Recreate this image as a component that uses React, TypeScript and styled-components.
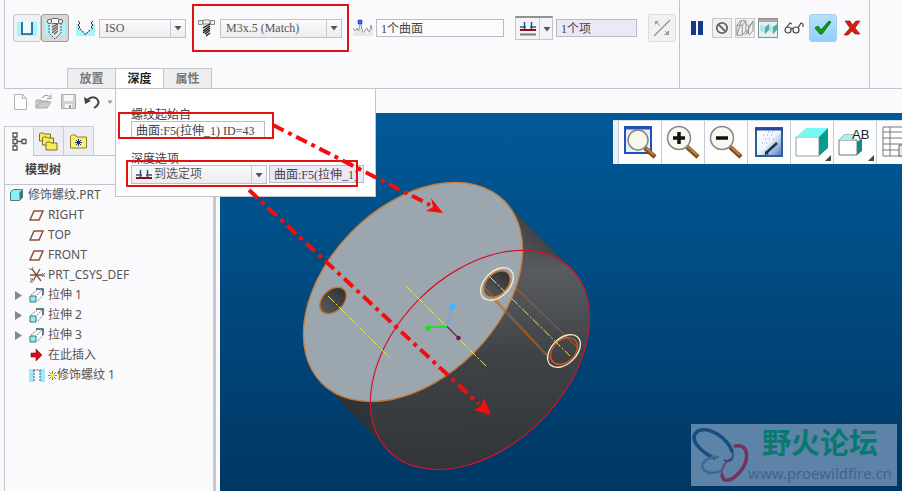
import React from "react";
import styled, { createGlobalStyle } from "styled-components";

const uiFont = `"Liberation Serif", "Noto Sans CJK SC", serif`;
const treeFont = `"Noto Sans", "Noto Sans CJK SC", sans-serif`;

const GlobalStyle = createGlobalStyle`
  * { box-sizing: border-box; }
  body { margin: 0; background: #fafafd; font-family: ${treeFont}; font-size: 12px; color: #555; }
  button, input, select { font: inherit; color: inherit; margin: 0; border-radius: 0; }
  svg { display: block; flex: none; }
`;

const Page = styled.div`
  position: relative;
  display: flex;
  flex-direction: column;
  min-height: 100vh;
  overflow: hidden;
`;

/* ---------- ribbon ---------- */
const Ribbon = styled.header`
  display: flex;
  height: 89px;
  margin-left: 4px;
  border-left: 1px solid #c3c5cb;
  border-bottom: 1px solid #c3c5cb;
`;
const Dashboard = styled.div`
  display: flex;
  flex-direction: column;
  justify-content: space-between;
  width: 675px;
  flex: none;
  border-right: 1px solid #c3c5cb;
`;
const ToolRow = styled.div`
  display: flex;
  align-items: center;
  height: 28px;
  margin-top: 14px;
  padding-left: 8px;
`;
const Confirm = styled(ToolRow)`
  height: 88px;
  margin: 0;
  padding: 0 7px 32px 7px;
  gap: 3px;
  border-right: 1px solid #c3c5cb;
`;
const SquareButton = styled.button<{ $tone?: "plain" | "pressed" | "go" | "off" }>`
  display: flex;
  align-items: center;
  justify-content: center;
  width: 28px;
  height: 28px;
  flex: none;
  padding: 0;
  border-radius: 3px;
  border: 1px solid ${(p) => (p.$tone === "pressed" ? "#9b9b9b" : p.$tone === "go" ? "#9fd0ef" : p.$tone === "off" ? "#dcdcdf" : "#c6c6c8")};
  background: ${(p) => (p.$tone === "pressed" ? "#d8d8da" : p.$tone === "go" ? "linear-gradient(#b9e0fb, #8fd0fb)" : "#f1f1f3")};
`;
const SmallButton = styled.button<{ $frame?: "light" | "dark" | "none" }>`
  display: flex;
  align-items: center;
  justify-content: center;
  width: 20px;
  height: 20px;
  flex: none;
  padding: 0;
  border: ${(p) => (p.$frame === "dark" ? "1px solid #8d8d90" : p.$frame === "light" ? "1px solid #c9c9cc" : "0")};
  background: ${(p) => (p.$frame === "dark" ? "#c9cbce" : p.$frame === "light" ? "#f1f1f3" : "transparent")};
`;
const Slot = styled.span<{ $before: number; $after: number }>`
  display: block;
  flex: none;
  margin: 0 ${(p) => p.$after}px 0 ${(p) => p.$before}px;
`;
const SelectFrame = styled.label<{ $width: number }>`
  display: grid;
  grid-template-columns: 1fr 15px;
  align-items: center;
  width: ${(p) => p.$width}px;
  height: 19px;
  flex: none;
  border: 1px solid #bfc1c6;
  background: linear-gradient(#fafafc, #ededf0);
  font-family: ${uiFont};
`;
const Select = styled.select<{ $indent: number }>`
  grid-area: 1 / 1 / 2 / 3;
  appearance: none;
  width: 100%;
  height: 17px;
  padding: 0 16px 0 ${(p) => p.$indent}px;
  border: 0;
  background: transparent;
  line-height: 17px;
`;
const SelectArrow = styled.span`
  grid-area: 1 / 2;
  display: flex;
  align-items: center;
  justify-content: center;
  height: 17px;
  border-left: 1px solid #c9cbd0;
  pointer-events: none;
`;
const SelectIcon = styled.span`
  grid-area: 1 / 1;
  padding-left: 4px;
  pointer-events: none;
`;
const Collector = styled.input<{ $width: number; $active?: boolean }>`
  width: ${(p) => p.$width}px;
  height: 18px;
  flex: none;
  padding: 0 4px;
  border: 1px solid #b9bbc1;
  background: ${(p) => (p.$active ? "#ece8f7" : "#fbfafd")};
  color: #444;
  font-family: ${uiFont};
  line-height: 16px;
`;
const SplitButton = styled.button`
  display: grid;
  grid-template-columns: 23px 14px;
  align-items: center;
  width: 38px;
  height: 24px;
  flex: none;
  padding: 0;
  border: 1px solid #c3c5c9;
  border-top: 2px solid #8f9195;
  background: #f4f4f6;
`;
const SplitPart = styled.span<{ $divided?: boolean }>`
  display: flex;
  align-items: center;
  justify-content: center;
  height: 21px;
  border-left: ${(p) => (p.$divided ? "1px solid #c9cbd0" : "0")};
`;
const TabRow = styled.div`
  display: flex;
  margin-left: 62px;
`;
const Tab = styled.button<{ $active?: boolean }>`
  width: 48px;
  height: 20px;
  padding: 0;
  border: 1px solid #c3c5cb;
  border-width: 1px 1px 0 0;
  background: ${(p) => (p.$active ? "#fff" : "#eceef0")};
  color: ${(p) => (p.$active ? "#222" : "#777")};
  font-weight: 700;
  line-height: 18px;
  &:first-child { border-left-width: 1px; width: 49px; }
`;

/* ---------- depth panel ---------- */
const DepthPanel = styled.section`
  position: absolute;
  left: 115px;
  top: 88px;
  width: 261px;
  height: 109px;
  padding: 17px 11px 0 15px;
  border: 1px solid #c3c5cb;
  background: #fff;
`;
const FieldLabel = styled.label`
  display: block;
  height: 15px;
  line-height: 18px;
  color: #444;
`;
const FieldRow = styled.div`
  display: flex;
  gap: 2px;
  height: 29px;
`;

/* ---------- body ---------- */
const Body = styled.div`
  display: flex;
  flex: 1;
`;
const Side = styled.aside`
  display: flex;
  flex-direction: column;
  width: 220px;
  flex: none;
`;
const QuickBar = styled.div`
  display: flex;
  align-items: center;
  gap: 4px;
  height: 37px;
  padding: 0 0 12px 11px;
`;
const QuickButton = styled.button<{ $width: number }>`
  display: flex;
  justify-content: center;
  width: ${(p) => p.$width}px;
  padding: 0;
  border: 0;
  background: transparent;
`;
const Navigator = styled.nav`
  flex: 1;
  width: 212px;
  margin-left: 4px;
  border-left: 1px solid #c3c5cb;
  border-right: 3px solid #c6c9d0;
`;
const NavTabs = styled.div`
  display: flex;
  height: 30px;
  border-bottom: 1px solid #c3c5cb;
`;
const NavTab = styled.button<{ $active?: boolean }>`
  display: flex;
  align-items: center;
  justify-content: center;
  width: ${(p) => (p.$active ? 29 : 30)}px;
  height: ${(p) => (p.$active ? 30 : 29)}px;
  padding: 0;
  border: 1px solid #c9cbd0;
  border-width: 1px 1px 0 0;
  background: ${(p) => (p.$active ? "#fafafd" : "#eceef1")};
`;
const NavTitle = styled.h2`
  height: 29px;
  margin: 0;
  padding-left: 20px;
  border-bottom: 1px solid #c3c5cb;
  font-size: 12px;
  line-height: 28px;
  color: #444;
`;
const TreeList = styled.ul`
  margin: 0;
  padding: 0;
  list-style: none;
`;
const TreeRow = styled.li<{ $root?: boolean }>`
  display: grid;
  grid-template-columns: ${(p) => (p.$root ? "18px 1fr" : "14px 19px 1fr")};
  align-items: center;
  height: 20px;
  padding-left: ${(p) => (p.$root ? 5 : 10)}px;
  line-height: 20px;
`;
const TreeText = styled.span`
  display: flex;
  align-items: center;
  white-space: nowrap;
`;

/* ---------- viewport ---------- */
const Main = styled.main`
  display: flex;
  flex: 1;
  flex-direction: column;
  padding-top: 24px;
`;
const Viewport = styled.div`
  position: relative;
  flex: 1;
  overflow: hidden;
  background: linear-gradient(#005a98, #003764);
`;
const Scene = styled.svg`
  position: absolute;
  inset: 0;
  width: 100%;
  height: 100%;
`;
const ViewTools = styled.div`
  position: absolute;
  top: 7px;
  right: 0;
  display: flex;
  width: 289px;
  height: 44px;
  padding-left: 5px;
  overflow: hidden;
  border-top: 1px solid #d5dbe0;
  background: #eef1f3;
`;
const ViewTool = styled.button`
  width: 43px;
  height: 43px;
  flex: none;
  padding: 0;
  border: 0;
  border-left: 1px solid #c5cbd2;
  background: #fdfdfe;
`;
const Watermark = styled.div`
  position: absolute;
  right: 5px;
  bottom: 5px;
  display: flex;
  width: 206px;
  height: 62px;
  background: #5d84a8;
`;
const WatermarkText = styled.div`
  display: flex;
  flex-direction: column;
  align-items: center;
  width: 148px;
  flex: none;
`;
const Brand = styled.strong`
  height: 37px;
  font-size: 29px;
  line-height: 38px;
  color: #08796f;
  white-space: nowrap;
`;
const Site = styled.a`
  font-size: 15px;
  line-height: 24px;
  color: #3d658f;
  text-decoration: none;
  font-family: "Noto Sans", sans-serif;
`;
const Callouts = styled.svg`
  position: absolute;
  inset: 0;
  width: 100%;
  height: 100%;
  pointer-events: none;
`;

/* ---------- icons ---------- */
const Caret = ({ size = 8, color = "#555" }: { size?: number; color?: string }) => (
  <svg width={size} height={size} viewBox="0 0 8 8"><path d="M0.5 2h7L4 6.5z" fill={color} /></svg>
);
const PlainHole = () => (
  <svg width="22" height="22" viewBox="0 0 22 22">
    <path d="M1 5h20v14H1z" fill="#9ffafa" />
    <path d="M6 5h10v12H6z" fill="#eefcff" />
    <path d="M6 5v12h10V5" fill="none" stroke="#234b8c" strokeWidth="1.6" />
  </svg>
);
const ThreadHole = () => (
  <svg width="24" height="24" viewBox="0 0 24 24">
    <path d="M2 6h20v13H2z" fill="#9ffafa" />
    <path d="M6 7h12v10l-6 6-6-6z" fill="#e4e6e6" stroke="#44577a" strokeDasharray="2 1" />
    <path d="M9 8h6v8l-3 4-3-4z" fill="#c9c9c9" />
    <rect x="4.500" y="3.500" width="4" height="4" rx="1.500" fill="#f5f5f5" stroke="#666" />
    <rect x="8.500" y="2.500" width="7" height="5" rx="1" fill="#f5f5f5" stroke="#666" />
    <rect x="15.500" y="3.500" width="4" height="4" rx="1.500" fill="#f5f5f5" stroke="#666" />
    <path d="M9 11l6-3M9 14l6-4M9 17l6-5M11 18l4-3" stroke="#444" />
  </svg>
);
const TaperHole = () => (
  <svg width="19" height="15" viewBox="0 0 19 15">
    <path d="M0 3h19v12H0z" fill="#a4f8fa" />
    <path d="M4 0h11v9l-5.500 5L4 9z" fill="#fafafd" />
    <path d="M2 0l2 2-2 2 2 2-2 2M17 0l-2 2 2 2-2 2 2 2" fill="none" stroke="#333" />
    <path d="M4 8l5.500 5.500L15 8" fill="none" stroke="#315a9b" strokeWidth="1.300" strokeDasharray="2 1" />
  </svg>
);
const Screw = () => (
  <svg width="17" height="18" viewBox="0 0 17 18">
    <path d="M.5 1.500h4v4h-4zM5 1h7v4H5zM12.500 1.500h4v4h-4z" fill="#eee" stroke="#888" />
    <path d="M5 6h7v8l-3 3-4-4z" fill="#d0d0d0" />
    <path d="M5 9l7-4M5 12l7-5M5 14l7-5M7 15l5-4M8 17l4-3" stroke="#222" strokeWidth="1.2" />
  </svg>
);
const CurvePoint = () => (
  <svg width="20" height="18" viewBox="0 0 20 18">
    <path d="M0 14l4-1 3-5 4 5 3 1 6-5v8H0z" fill="#e6e8ea" />
    <path d="M0 9q2 6 4 0 2 8 3-5M8 5q1 11 4 7 2-6 3 0 2 3 3-6l1 4" fill="none" stroke="#909398" />
    <path d="M5.500 1.500h3v3h-3z" fill="#7ea0f5" stroke="#2148dc" strokeWidth="1.500" />
  </svg>
);
const DepthTo = ({ under = false }: { under?: boolean }) => (
  <svg width="16" height={under ? 16 : 12} viewBox={under ? "0 0 16 16" : "0 0 16 12"}>
    <path d="M0 6h4M12 6h4" stroke="#5e8292" strokeWidth="2" />
    <path d="M4.500 1v8M11.500 1v8M4 6h2M10 6h2" stroke="#25508c" strokeWidth="1.500" fill="none" />
    <path d="M0 9h16" stroke="#8c0b1b" strokeWidth="2" />
    {under && <path d="M0 13.500h16" stroke="#777" strokeWidth="2" />}
  </svg>
);
const Flip = () => (
  <svg width="18" height="18" viewBox="0 0 18 18" stroke="#999" fill="#999">
    <path d="M1 17L17 1" strokeWidth="1.500" />
    <path d="M4 4l3 3M12 12l2 2" /><path d="M2 2h4L2 6zM16 16h-5l5-5z" stroke="none" />
  </svg>
);
const Pause = () => (
  <svg width="14" height="16" viewBox="0 0 14 16"><path d="M1 1h5v14H1zM8 1h5v14H8z" fill="#123a8c" /></svg>
);
const Forbidden = () => (
  <svg width="14" height="14" viewBox="0 0 14 14" fill="none" stroke="#666" strokeWidth="1.800">
    <circle cx="7" cy="7" r="5.200" /><path d="M3.500 3.500l7 7" />
  </svg>
);
const WireBoxes = () => (
  <svg width="18" height="18" viewBox="0 0 20 20" fill="none" stroke="#888">
    <path d="M1 7l4-5h6v11l-4 5H1zM1 7h6v11M7 7l4-5M11 5l3 3v9l-3-4M14 8l5-5v10l-5 5M1 18L6 2M10 18l9-16" />
  </svg>
);
const SolidBoxes = () => (
  <svg width="18" height="18" viewBox="0 0 18 18">
    <path d="M0 0h18v18H0z" fill="#e9eeef" /><path d="M0 0h18v3H0z" fill="#a7aaad" />
    <path d="M1 5l5 3v7l-5-4zM10 5l4 3v7l-4-4z" fill="#a8e9e3" /><path d="M6 8l4-3v6l-4 4zM14 8l4-3v6l-4 4z" fill="#56a9a5" />
  </svg>
);
const Glasses = () => (
  <svg width="20" height="14" viewBox="0 0 20 14" fill="none" stroke="#4b463a" strokeWidth="1.200">
    <circle cx="4" cy="9" r="3" /><circle cx="12" cy="9" r="3" />
    <path d="M7 8q1-2 2 0M2 7l4-5 2 1M14 7l3-5 2 1v3" />
  </svg>
);
const Check = () => (
  <svg width="18" height="16" viewBox="0 0 18 16"><path d="M1 8l3-2 3 4 8-9 2 1L8 14H6z" fill="#109817" stroke="#087d10" /></svg>
);
const Cross = () => (
  <svg width="18" height="18" viewBox="0 0 18 18"><path d="M2 2h5l2.500 4L13 2h4l-5 7 5 6h-5l-3-3-4 4H1l6-7z" fill="#d51d15" stroke="#a51412" strokeWidth=".7" /></svg>
);
const NewDoc = () => (
  <svg width="13" height="16" viewBox="0 0 13 16"><path d="M.5.5h8l4 4v11H.5zM8.500.5v4h4" fill="#fdfdfd" stroke="#b4b4b7" /></svg>
);
const OpenDoc = () => (
  <svg width="18" height="16" viewBox="0 0 18 16">
    <path d="M1 14V6h5l1 1h6v2M1 14l4-6h11l-4 6z" fill="#ccccce" stroke="#aaa" /><path d="M7 4q4-5 8-1M16 .5v4h-4" fill="none" stroke="#999" />
  </svg>
);
const SaveDoc = () => (
  <svg width="15" height="15" viewBox="0 0 15 15"><path d="M.5.5h14v14H.5z" fill="#d2d2d4" stroke="#aaa" /><path d="M3 1h9v6H3zM4 10h7v4H4z" fill="#f7f7f8" /><path d="M8 11h2v3H8z" fill="#999" /></svg>
);
const Undo = () => (
  <svg width="17" height="14" viewBox="0 0 17 14"><path d="M3 5q6-5 10-1 4 5-3 9" fill="none" stroke="#444" strokeWidth="2" /><path d="M0 2l1 7 6-3z" fill="#444" /></svg>
);
const TreeTab = () => (
  <svg width="15" height="19" viewBox="0 0 15 19" fill="#fff" stroke="#555" strokeWidth="1.300"><path d="M3 4v11M3 9.500h7" /><path d="M1 1h4v4H1zM1 7.500h4v4H1zM1 14h4v4H1zM10 7.500h4v4h-4z" /></svg>
);
const Folders = () => (
  <svg width="19" height="19" viewBox="0 0 19 19" fill="#f7ec5b" stroke="#77702b">
    <path d="M.5 9V2l1-1h3l1 1h6v7z" /><path d="M3.500 13V6l1-1h3l1 1h6v7z" /><path d="M7 18v-7l1-1h3l1 1h6v7z" />
  </svg>
);
const Favorite = () => (
  <svg width="17" height="15" viewBox="0 0 17 15"><path d="M.5 14V3l1-2h4l1 2h10v11z" fill="#fbf36b" stroke="#8a8232" /><path d="M8.500 5v7M5 8.500h7M6 6l5 5M11 6l-5 5" stroke="#172d80" /></svg>
);
const Part = () => (
  <svg width="13" height="12" viewBox="0 0 13 12"><path d="M.5 3l3-2.500h9v8l-3 3h-9z" fill="#8deff2" stroke="#50777b" /><path d="M9.500 3v8l3-2.500V1z" fill="#32777c" /></svg>
);
const Plane = () => (
  <svg width="15" height="11" viewBox="0 0 15 11"><path d="M1 10L5 1h9l-4 9z" fill="none" stroke="#925036" strokeWidth="1.500" /></svg>
);
const Csys = () => (
  <svg width="17" height="16" viewBox="0 0 17 16" fill="none" stroke="#805039" strokeWidth="1.300">
    <path d="M1 8h13M3 2l9 12M11 2L4 14" /><path d="M0 1l2 2 2-3M1 12h3l-3 3h3M13 6l3 4M16 6l-3 4" stroke="#777" strokeWidth="1" />
  </svg>
);
const Extrude = () => (
  <svg width="15" height="15" viewBox="0 0 15 15" fill="none"><path d="M1 8h6v6H1z" fill="#92eef0" stroke="#34777e" /><path d="M7 1h7v6" stroke="#315960" strokeWidth="1.500" /><path d="M2 7l6-5M9 13l5-6M8 7l5-5" stroke="#888" strokeDasharray="2 1" /></svg>
);
const InsertArrow = () => (
  <svg width="15" height="12" viewBox="0 0 15 12"><path d="M2 4h5V0l6 6-6 6V8H2z" fill="#d40b16" stroke="#8c0810" strokeWidth=".6" /></svg>
);
const ThreadFeature = () => (
  <svg width="16" height="13" viewBox="0 0 16 13"><path d="M0 0h5v13H0zM11 0h5v13h-5z" fill="#9eeaf0" /><path d="M4.500 1h7M5 1v12M11 1v12" stroke="#34598c" strokeDasharray="2 1" /></svg>
);
const NewStar = () => (
  <svg width="9" height="9" viewBox="0 0 9 9"><path d="M4.500 0v9M0 4.500h9M1 1l7 7M8 1L1 8" stroke="#8b8610" /><circle cx="4.500" cy="4.500" r="2" fill="#f3ec24" /></svg>
);
const Lens = ({ sign, x = 0 }: { sign?: "+" | "-"; x?: number }) => (
  <g transform={`translate(${x} 0)`}>
    <path d="M25 26l11 10" stroke="#80511c" strokeWidth="4.500" /><path d="M26 26l9 8" stroke="#c8924a" strokeWidth="1.500" />
    <circle cx="17" cy="17" r="11.500" fill="#f6f7ed" stroke="#858585" strokeWidth="1.500" />
    {sign && <path d="M11 17h12" stroke="#111" strokeWidth="3.500" />}
    {sign === "+" && <path d="M17 11v12" stroke="#111" strokeWidth="3.500" />}
  </g>
);
const Corner = () => <path d="M40 34v6h-6z" fill="#444" />;
const ToolSvg = ({ children }: { children: React.ReactNode }) => <svg width="42" height="43" viewBox="0 0 42 43">{children}</svg>;

const viewTools: { name: string; art: React.ReactNode }[] = [
  { name: "Refit", art: <><path d="M6 6h26v26H6z" fill="#e8f0fc" stroke="#2550b5" strokeWidth="2" /><path d="M5 7h28" stroke="#2550b5" strokeWidth="3" /><g transform="translate(2 2)"><circle cx="17" cy="17" r="10" fill="#f6f7ed" stroke="#858585" strokeWidth="1.500" /><path d="M24 25l10 9" stroke="#80511c" strokeWidth="4.500" /><path d="M25 25l8 7" stroke="#c8924a" strokeWidth="1.500" /></g></> },
  { name: "Zoom in", art: <Lens sign="+" /> },
  { name: "Zoom out", art: <Lens sign="-" /> },
  { name: "Repaint", art: <><path d="M8 7h26v28H8z" fill="url(#paint)" stroke="#315c9b" strokeWidth="2" /><path d="M7 8h28" stroke="#224b9b" strokeWidth="3" /><path d="M15 14h10M17 18h12M14 22h8M20 11h8" stroke="#7b9bc5" strokeDasharray="1 3" /><path d="M18 32l11-10" stroke="#15345f" strokeWidth="2.500" /><path d="M17 30l4 3-4 1z" fill="#15345f" /></> },
  { name: "Display style", art: <><path d="M5 16h23v19H5z" fill="#fff" stroke="#8aa5a5" /><path d="M5 16l10-9h22l-9 9z" fill="#79f7f2" /><path d="M28 16l9-9v20l-9 8z" fill="#0c9990" /><Corner /></> },
  { name: "Annotations", art: <><path d="M5 19l5-5h10M5 19h18v15H5z" fill="#fff" stroke="#777" /><path d="M5 19l5-5h12l-3 5z" fill="#a2f4f2" /><path d="M23 21l5-4v13l-5 4z" fill="#148a83" /><text x="18" y="18" fontFamily="Liberation Sans, sans-serif" fontSize="13" fill="#222">AB</text><Corner /></> },
  { name: "View manager", art: <><path d="M6 6h30v29H6zM6 11h30M6 17h30M6 23h30M6 29h30M13 6v29" fill="#fff" stroke="#777" /><path d="M22 24h9v11h-9z" fill="#eee6ce" stroke="#666" /></> },
];

const Disc = ({ x, y, a, b, ...rest }: { x: number; y: number; a: number; b: number } & React.SVGProps<SVGEllipseElement>) => (
  <ellipse cx={x} cy={y} rx={a} ry={b} transform={`rotate(-45 ${x} ${y})`} {...rest} />
);

const Model = () => (
  <Scene aria-label="3D model">
    <defs>
      <linearGradient id="side" gradientUnits="userSpaceOnUse" x1="380" y1="440" x2="560" y2="250">
        <stop offset="0" stopColor="#303335" /><stop offset=".5" stopColor="#404346" /><stop offset=".82" stopColor="#585b60" /><stop offset="1" stopColor="#3f4246" />
      </linearGradient>
      <linearGradient id="bore"><stop offset="0" stopColor="#555a5c" /><stop offset="1" stopColor="#303334" /></linearGradient>
      <linearGradient id="paint" x2="1" y2="1"><stop offset="0" stopColor="#fff" /><stop offset=".5" stopColor="#edf5ff" /><stop offset="1" stopColor="#4777b9" /></linearGradient>
    </defs>
    <g transform="translate(-220 -113)" fill="none">
      <path d="M504 201l67 68-182 182-67-68z" fill="url(#side)" />
      <Disc x={480} y={360} a={129} b={86} fill="url(#side)" />
      <Disc x={413} y={292} a={129} b={86} fill="#9ca6af" stroke="#c77a35" strokeWidth="1.300" />
      <Disc x={480} y={360} a={129} b={86} stroke="#d0142b" strokeWidth="1.200" />
      <Disc x={333} y={300.5} a={15.5} b={10.5} fill="url(#bore)" stroke="#c9772e" strokeWidth="1.300" />
      <Disc x={497} y={284} a={15.5} b={10.5} fill="url(#bore)" stroke="#c9772e" strokeWidth="1.500" />
      <path d="M516 288l62 60M493 299l55 58M484 287l69 74" stroke="#b86420" />
      <Disc x={497} y={284} a={19.500} b={12.500} stroke="#f2efcc" strokeWidth="1.300" />
      <Disc x={564} y={351} a={15.500} b={11} stroke="#dc5128" strokeWidth="1.300" />
      <Disc x={564} y={351} a={19.500} b={12.500} stroke="#f2efcc" strokeWidth="1.300" />
      <path d="M406 286l80 80M328 296l62 62M490 277l80 79" stroke="#e4e65a" strokeDasharray="9 2 2 2" />
      <path d="M447 326.500l5-20" stroke="#6da9db" strokeWidth="1.500" /><circle cx="452.500" cy="306.500" r="3" fill="#42b3ff" />
      <path d="M447 326.500l-19 1" stroke="#18df24" strokeWidth="1.500" /><circle cx="428" cy="328" r="2.800" fill="#0bea18" />
      <path d="M447 326.500l11 11" stroke="#653558" strokeWidth="1.500" /><circle cx="458.500" cy="338" r="2.300" fill="#721c4b" />
    </g>
  </Scene>
);

const treeItems: { text: string; icon: React.ReactNode; open?: boolean; fresh?: boolean }[] = [
  { text: "RIGHT", icon: <Plane /> },
  { text: "TOP", icon: <Plane /> },
  { text: "FRONT", icon: <Plane /> },
  { text: "PRT_CSYS_DEF", icon: <Csys /> },
  { text: "拉伸 1", icon: <Extrude />, open: true },
  { text: "拉伸 2", icon: <Extrude />, open: true },
  { text: "拉伸 3", icon: <Extrude />, open: true },
  { text: "在此插入", icon: <InsertArrow /> },
  { text: "修饰螺纹 1", icon: <ThreadFeature />, fresh: true },
];

export default function App() {
  return (
    <Page>
      <GlobalStyle />
      <Ribbon>
        <Dashboard>
          <ToolRow>
            <SquareButton aria-label="Simple thread"><PlainHole /></SquareButton>
            <SquareButton $tone="pressed" aria-label="Standard thread"><ThreadHole /></SquareButton>
            <Slot $before={7} $after={4}><TaperHole /></Slot>
            <SelectFrame $width={87}>
              <Select $indent={5} aria-label="Thread series"><option>ISO</option></Select>
              <SelectArrow><Caret /></SelectArrow>
            </SelectFrame>
            <Slot $before={12} $after={5}><Screw /></Slot>
            <SelectFrame $width={122}>
              <Select $indent={5} aria-label="Thread size"><option>M3x.5 (Match)</option></Select>
              <SelectArrow><Caret /></SelectArrow>
            </SelectFrame>
            <Slot $before={11} $after={3}><CurvePoint /></Slot>
            <Collector $width={128} defaultValue="1个曲面" aria-label="Thread surface" />
            <Slot $before={11} $after={3}>
              <SplitButton aria-label="Depth option">
                <SplitPart><DepthTo under /></SplitPart>
                <SplitPart $divided><Caret /></SplitPart>
              </SplitButton>
            </Slot>
            <Collector $width={81} $active defaultValue="1个项" aria-label="Depth reference" />
            <Slot $before={11} $after={0}>
              <SquareButton $tone="off" aria-label="Flip direction"><Flip /></SquareButton>
            </Slot>
          </ToolRow>
          <TabRow>
            <Tab>放置</Tab>
            <Tab $active>深度</Tab>
            <Tab>属性</Tab>
          </TabRow>
        </Dashboard>
        <Confirm>
          <SmallButton aria-label="Pause" $frame="none"><Pause /></SmallButton>
          <Slot $before={2} $after={0}><SmallButton aria-label="No preview" $frame="light"><Forbidden /></SmallButton></Slot>
          <SmallButton aria-label="Wireframe preview" $frame="light"><WireBoxes /></SmallButton>
          <SmallButton aria-label="Attached preview" $frame="dark"><SolidBoxes /></SmallButton>
          <Slot $before={3} $after={2}><SmallButton aria-label="Verify" $frame="none"><Glasses /></SmallButton></Slot>
          <SquareButton $tone="go" aria-label="Accept"><Check /></SquareButton>
          <Slot $before={2} $after={0}><SmallButton aria-label="Cancel" $frame="none"><Cross /></SmallButton></Slot>
        </Confirm>
      </Ribbon>

      <Body>
        <Side>
          <QuickBar>
            <QuickButton $width={19} aria-label="New"><NewDoc /></QuickButton>
            <QuickButton $width={20} aria-label="Open"><OpenDoc /></QuickButton>
            <QuickButton $width={20} aria-label="Save"><SaveDoc /></QuickButton>
            <QuickButton $width={20} aria-label="Undo"><Undo /></QuickButton>
            <QuickButton $width={8} aria-label="Undo list"><Caret size={6} color="#999" /></QuickButton>
          </QuickBar>
          <Navigator>
            <NavTabs>
              <NavTab $active aria-label="Model tree"><TreeTab /></NavTab>
              <NavTab aria-label="Folders"><Folders /></NavTab>
              <NavTab aria-label="Favorites"><Favorite /></NavTab>
            </NavTabs>
            <NavTitle>模型树</NavTitle>
            <TreeList>
              <TreeRow $root><Part /><TreeText>修饰螺纹.PRT</TreeText></TreeRow>
              {treeItems.map((item) => (
                <TreeRow key={item.text}>
                  <span>{item.open && <svg width="8" height="9" viewBox="0 0 8 9"><path d="M0 0l7 4.500L0 9z" fill="#888" /></svg>}</span>
                  {item.icon}
                  <TreeText>{item.fresh && <NewStar />}{item.text}</TreeText>
                </TreeRow>
              ))}
            </TreeList>
          </Navigator>
        </Side>
        <Main>
          <Viewport>
            <Model />
            <ViewTools>
              {viewTools.map((tool) => (
                <ViewTool key={tool.name} aria-label={tool.name}><ToolSvg>{tool.art}</ToolSvg></ViewTool>
              ))}
            </ViewTools>
            <Watermark>
              <svg width="55" height="62" viewBox="0 0 55 62" fill="none" strokeLinecap="round" overflow="visible">
                <path d="M23 34C8 27-3 14 7 7c12-5 29 7 34 20" stroke="#174d83" strokeWidth="3.500" />
                <path d="M41 27c3 8-1 12-8 9" stroke="#174d83" strokeWidth="1.500" />
                <path d="M44 22c15-3 15 16 3 28-7 7-15 9-16 1" stroke="#76305f" strokeWidth="3.500" />
                <path d="M31 51c-1-8 5-15 10-17" stroke="#76305f" strokeWidth="1.500" />
                <path d="M27 33c-12-1-19 8-14 13 4 4 12 4 18 0" stroke="#3c6992" strokeWidth="2.500" />
              </svg>
              <WatermarkText>
                <Brand>野火论坛</Brand>
                <Site href="#site">www.proewildfire.cn</Site>
              </WatermarkText>
            </Watermark>
          </Viewport>
        </Main>
      </Body>

      <DepthPanel>
        <FieldLabel htmlFor="start">螺纹起始自</FieldLabel>
        <FieldRow><Collector id="start" $width={134} defaultValue="曲面:F5(拉伸_1) ID=43" /></FieldRow>
        <FieldLabel htmlFor="depth">深度选项</FieldLabel>
        <FieldRow>
          <SelectFrame $width={136}>
            <Select id="depth" $indent={22}><option>到选定项</option></Select>
            <SelectIcon><DepthTo /></SelectIcon>
            <SelectArrow><Caret /></SelectArrow>
          </SelectFrame>
          <Collector $width={95} $active defaultValue="曲面:F5(拉伸_1)" aria-label="Selected item" />
        </FieldRow>
      </DepthPanel>

      <Callouts aria-hidden="true">
        <g fill="none" stroke="#e01212" strokeWidth="2">
          <path d="M193 5h155v46H193zM119 113h154v25H119zM127 161h230v25H127z" />
        </g>
        <g stroke="#f50d0d" strokeWidth="4" strokeDasharray="12 5 4 5">
          <path d="M273 125l157 80M249 190l230 214" />
        </g>
        <path d="M443 213l-17-2 7-4-2-9zM491 415l-17-5 7-4 3-8z" fill="#f50d0d" />
      </Callouts>
    </Page>
  );
}
